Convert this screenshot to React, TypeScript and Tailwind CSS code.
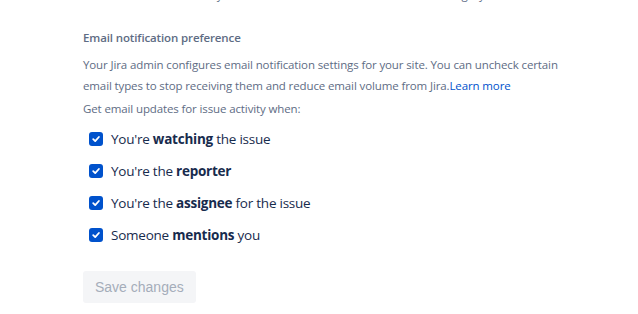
import { ReactNode } from "react";

const options: { id: string; label: ReactNode }[] = [
  { id: "watching", label: <>You're <strong className="font-bold">watching</strong> the issue</> },
  { id: "reporter", label: <>You're the <strong className="font-bold">reporter</strong></> },
  { id: "assignee", label: <>You're the <strong className="font-bold">assignee</strong> for the issue</> },
  { id: "mentions", label: <>Someone <strong className="font-bold">mentions</strong> you</> },
];

function CheckBox() {
  return (
    <span className="flex h-[14px] w-[14px] items-center justify-center rounded-[3px] bg-[#0052cc]">
      <svg width="10" height="10" viewBox="0 0 10 10" fill="none">
        <path d="M2.2 5.2 4.2 7.1 7.9 3" stroke="white" strokeWidth="1.8" strokeLinecap="round" strokeLinejoin="round" />
      </svg>
    </span>
  );
}

export default function App() {
  return (
    <div className="h-[314px] w-[638px] overflow-hidden bg-white pl-[83px] font-['Open_Sans',sans-serif] text-[11.5px] tracking-[-0.12px] text-[#5e6c84]">
      <div className="h-[3px] overflow-hidden">
        <p className="-mt-[15px] leading-[20px]">
          Choose the alerts sent to you about work items inside each team or category
        </p>
      </div>

      <h3 className="mt-[26px] font-semibold leading-[18px]">Email notification preference</h3>

      <p className="mt-[7px] w-[490px] leading-[21px]">
        Your Jira admin configures email notification settings for your site. You can uncheck certain email types
        to stop receiving them and reduce email volume from Jira.
        <a href="#" className="text-[#0052cc]">Learn more</a>
      </p>

      <p className="mt-[2px] leading-[21px]">Get email updates for issue activity when:</p>

      <ul className="mt-[4px] flex flex-col">
        {options.map((o) => (
          <li key={o.id} className="flex h-[32px] items-center gap-[8px] pl-[6px]">
            <CheckBox />
            <span className="text-[13.5px] tracking-[-0.24px] text-[#172b4d]">{o.label}</span>
          </li>
        ))}
      </ul>

      <button
        disabled
        className="mt-[20px] h-[32px] rounded-[3px] bg-[#f4f5f7] px-[12px] font-['Liberation_Sans',sans-serif] text-[14px] tracking-normal text-[#a5adba]"
      >
        Save changes
      </button>
    </div>
  );
}
